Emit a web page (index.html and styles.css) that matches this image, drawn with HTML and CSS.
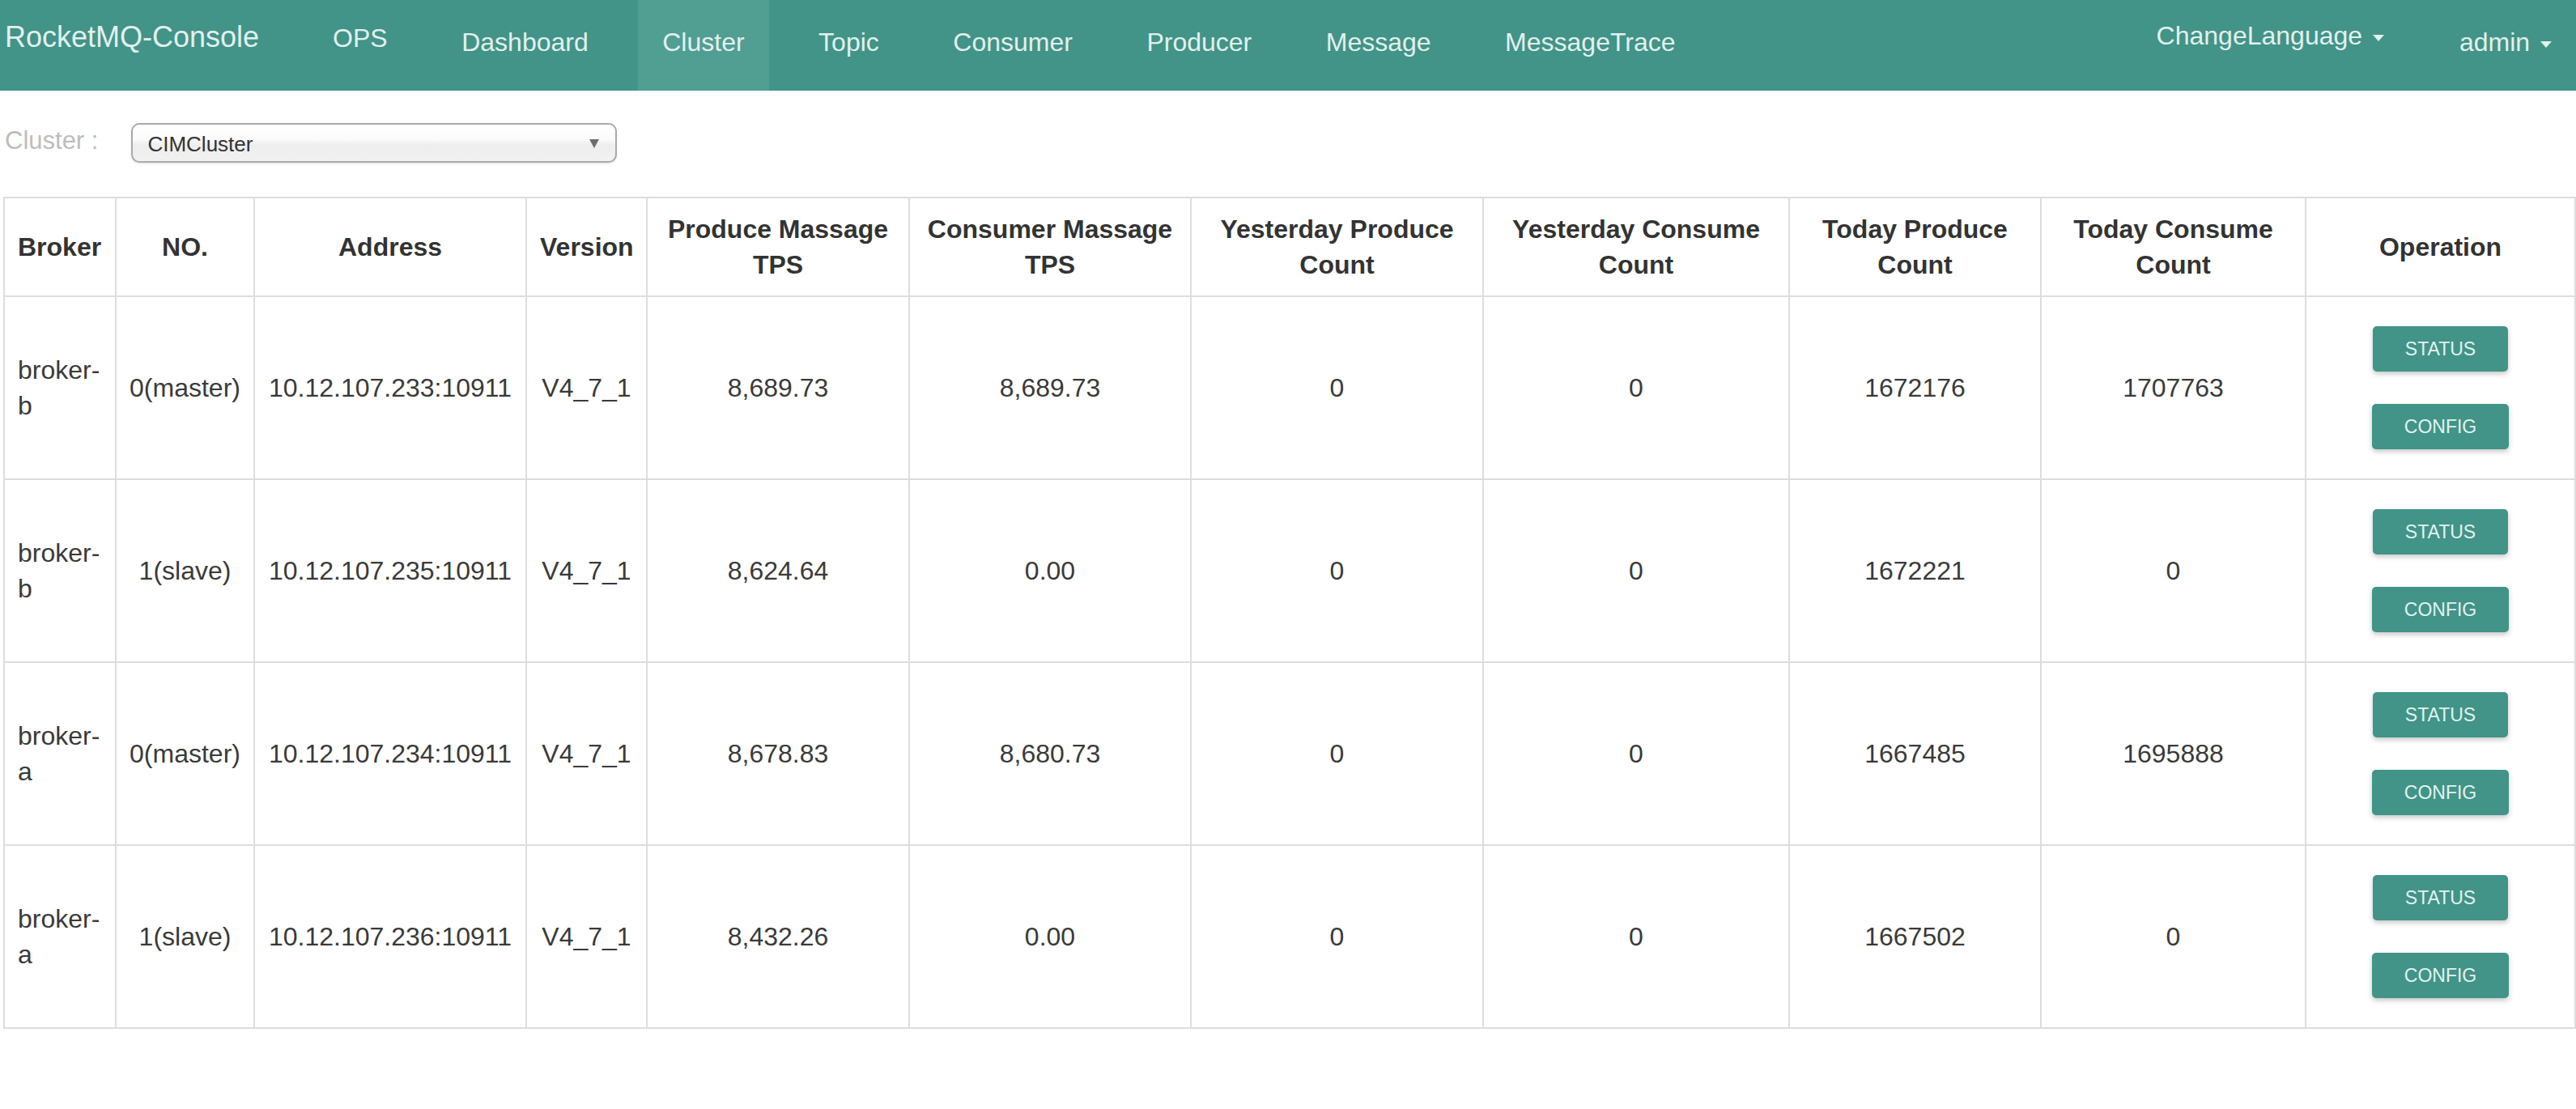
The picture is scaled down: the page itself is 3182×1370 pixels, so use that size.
FILE: index.html
```html
<!DOCTYPE html>
<html lang="en">
<head>
<meta charset="utf-8">
<title>RocketMQ-Console</title>
<link rel="stylesheet" href="styles.css">
</head>
<body>
<header class="navbar">
  <a class="brand">RocketMQ-Console</a>
  <ul class="nav">
    <li><a class="nav-link ops">OPS</a></li>
    <li><a class="nav-link">Dashboard</a></li>
    <li class="active"><a class="nav-link">Cluster</a></li>
    <li><a class="nav-link">Topic</a></li>
    <li><a class="nav-link">Consumer</a></li>
    <li><a class="nav-link">Producer</a></li>
    <li><a class="nav-link">Message</a></li>
    <li><a class="nav-link">MessageTrace</a></li>
  </ul>
  <ul class="nav nav-right">
    <li><a class="nav-link lang">ChangeLanguage <span class="caret"></span></a></li>
    <li><a class="nav-link user">admin <span class="caret"></span></a></li>
  </ul>
</header>

<main class="content">
  <div class="filter">
    <label class="filter-label">Cluster :</label>
    <div class="select-box">
      <span class="select-value">CIMCluster</span>
      <span class="select-arrow"></span>
    </div>
  </div>

  <table class="cluster-table">
    <colgroup>
      <col class="w-broker">
      <col class="w-no">
      <col class="w-addr">
      <col class="w-ver">
      <col class="w-ptps">
      <col class="w-ctps">
      <col class="w-yp">
      <col class="w-yc">
      <col class="w-tp">
      <col class="w-tc">
      <col class="w-op">
    </colgroup>
    <thead>
      <tr>
        <th class="left">Broker</th>
        <th>NO.</th>
        <th>Address</th>
        <th>Version</th>
        <th>Produce Massage TPS</th>
        <th>Consumer Massage TPS</th>
        <th>Yesterday Produce Count</th>
        <th>Yesterday Consume Count</th>
        <th>Today Produce Count</th>
        <th>Today Consume Count</th>
        <th>Operation</th>
      </tr>
    </thead>
    <tbody>
      <tr>
        <td class="left">broker-b</td>
        <td>0(master)</td>
        <td>10.12.107.233:10911</td>
        <td>V4_7_1</td>
        <td>8,689.73</td>
        <td>8,689.73</td>
        <td>0</td>
        <td>0</td>
        <td>1672176</td>
        <td>1707763</td>
        <td><div class="btn-stack"><button class="btn">STATUS</button><button class="btn">CONFIG</button></div></td>
      </tr>
      <tr>
        <td class="left">broker-b</td>
        <td>1(slave)</td>
        <td>10.12.107.235:10911</td>
        <td>V4_7_1</td>
        <td>8,624.64</td>
        <td>0.00</td>
        <td>0</td>
        <td>0</td>
        <td>1672221</td>
        <td>0</td>
        <td><div class="btn-stack"><button class="btn">STATUS</button><button class="btn">CONFIG</button></div></td>
      </tr>
      <tr>
        <td class="left">broker-a</td>
        <td>0(master)</td>
        <td>10.12.107.234:10911</td>
        <td>V4_7_1</td>
        <td>8,678.83</td>
        <td>8,680.73</td>
        <td>0</td>
        <td>0</td>
        <td>1667485</td>
        <td>1695888</td>
        <td><div class="btn-stack"><button class="btn">STATUS</button><button class="btn">CONFIG</button></div></td>
      </tr>
      <tr>
        <td class="left">broker-a</td>
        <td>1(slave)</td>
        <td>10.12.107.236:10911</td>
        <td>V4_7_1</td>
        <td>8,432.26</td>
        <td>0.00</td>
        <td>0</td>
        <td>0</td>
        <td>1667502</td>
        <td>0</td>
        <td><div class="btn-stack"><button class="btn">STATUS</button><button class="btn">CONFIG</button></div></td>
      </tr>
    </tbody>
  </table>
</main>
</body>
</html>
```

FILE: styles.css
```css
* {
  box-sizing: border-box;
}

html, body {
  margin: 0;
  padding: 0;
  background: #ffffff;
}

body {
  font-family: "Liberation Sans", Arial, Helvetica, sans-serif;
  color: #333333;
}

/* ---------- navbar ---------- */
.navbar {
  display: flex;
  align-items: stretch;
  height: 112px;
  background: #419487;
}

.brand {
  display: block;
  padding: 24px 0 0 6px;
  margin-right: 61px;
  font-size: 36px;
  line-height: 44px;
  color: #e3f0ed;
  white-space: nowrap;
}

.nav {
  display: flex;
  gap: 31.5px;
  list-style: none;
  margin: 0;
  padding: 0;
}

.nav li {
  display: block;
}

.nav-right {
  margin-left: auto;
  gap: 33px;
}

.nav-link {
  display: block;
  height: 112px;
  padding: 30px 30px 0;
  font-size: 32px;
  line-height: 44px;
  color: #e3f0ed;
  white-space: nowrap;
  cursor: pointer;
}

.nav-link.ops {
  padding-top: 25px;
}

.nav-link.lang {
  padding-top: 22px;
}

.nav-link.user {
  padding-top: 30px;
}

.nav li.active .nav-link {
  background: #519e93;
}

.caret {
  display: inline-block;
  width: 0;
  height: 0;
  margin-left: 4px;
  vertical-align: middle;
  border-top: 8px solid #e3f0ed;
  border-left: 7.5px solid transparent;
  border-right: 7.5px solid transparent;
}

/* ---------- content ---------- */
.content {
  padding: 0 2px 0 4px;
}

.filter {
  display: flex;
  align-items: center;
  margin-top: 40px;
  padding-left: 2px;
}

.filter-label {
  font-size: 31px;
  color: #bdbdbd;
  margin-right: 41px;
  padding-bottom: 6px;
  white-space: nowrap;
}

.select-box {
  display: flex;
  align-items: center;
  justify-content: space-between;
  width: 600px;
  height: 49px;
  padding: 0 20px 0 18px;
  border: 2px solid #a9a9a9;
  border-radius: 10px;
  background: linear-gradient(#ffffff 0%, #fbfbfb 40%, #eeeeee 56%, #f1f1f1 100%);
  box-shadow: 0 2px 3px rgba(0, 0, 0, 0.08);
}

.select-value {
  font-size: 26px;
  color: #333333;
  padding-top: 4px;
}

.select-arrow {
  width: 0;
  height: 0;
  border-top: 11px solid #6e6e6e;
  border-left: 6.5px solid transparent;
  border-right: 6.5px solid transparent;
  margin-top: 2px;
}

/* ---------- table ---------- */
.cluster-table {
  width: 100%;
  margin-top: 42px;
  table-layout: fixed;
  border-collapse: collapse;
  border: 2px solid #dddddd;
}

.w-broker { width: 138px; }
.w-no { width: 171px; }
.w-addr { width: 336px; }
.w-ver { width: 149px; }
.w-ptps { width: 324px; }
.w-ctps { width: 348px; }
.w-yp { width: 361px; }
.w-yc { width: 378px; }
.w-tp { width: 311px; }
.w-tc { width: 327px; }
.w-op { width: 333px; }

.cluster-table th,
.cluster-table td {
  padding: 16px;
  border: 2px solid #dddddd;
  font-size: 32px;
  line-height: 44px;
  text-align: center;
  vertical-align: middle;
}

.cluster-table th {
  font-weight: bold;
  color: #333333;
}

.cluster-table td {
  font-weight: normal;
  color: #3a3a3a;
}

.cluster-table .left {
  text-align: left;
}

.btn-stack {
  display: flex;
  flex-direction: column;
  align-items: center;
  gap: 40px;
  padding: 20px 0;
}

.btn {
  display: block;
  height: 56px;
  padding: 0 40px;
  border: none;
  border-radius: 5px;
  background: #419487;
  color: #e3f2ef;
  font-family: "Liberation Sans", Arial, Helvetica, sans-serif;
  font-size: 23px;
  line-height: 56px;
  text-transform: uppercase;
  box-shadow: 0 3px 6px rgba(0, 0, 0, 0.22);
  cursor: pointer;
}
```
